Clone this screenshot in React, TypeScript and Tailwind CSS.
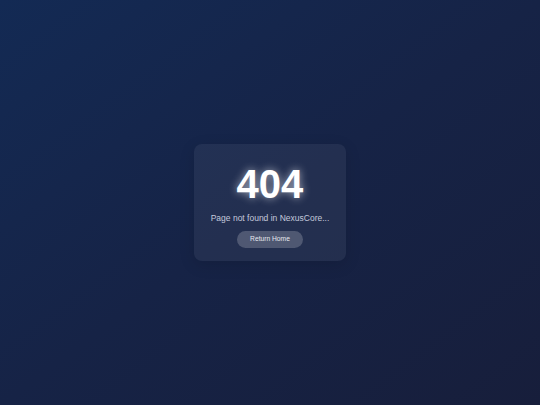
import React from 'react';

export default function App() {
  return (
    <div
      className="min-h-screen w-full flex items-center justify-center bg-gradient-to-br from-[#132a54] via-[#162346] to-[#171e3b]"
      style={{ fontFamily: '"Liberation Sans", Arial, sans-serif' }}
    >
      <div className="flex flex-col items-center rounded-[8px] bg-white/[0.06] px-[17px] pt-[20px] pb-[13px] shadow-[0_4px_16px_rgba(0,0,0,0.12)]">
        <h1 className="text-[40px] leading-none font-bold text-white [text-shadow:0_0_8px_rgba(255,255,255,0.6)]">
          404
        </h1>
        <p className="mt-[10px] text-[8.5px] leading-none text-[#c3c9dc]">
          Page not found in NexusCore...
        </p>
        <button className="mt-[9px] h-[17px] px-[13px] rounded-full bg-white/20 text-[6.7px] text-[#e6e8ef] leading-none">
          Return Home
        </button>
      </div>
    </div>
  );
}
